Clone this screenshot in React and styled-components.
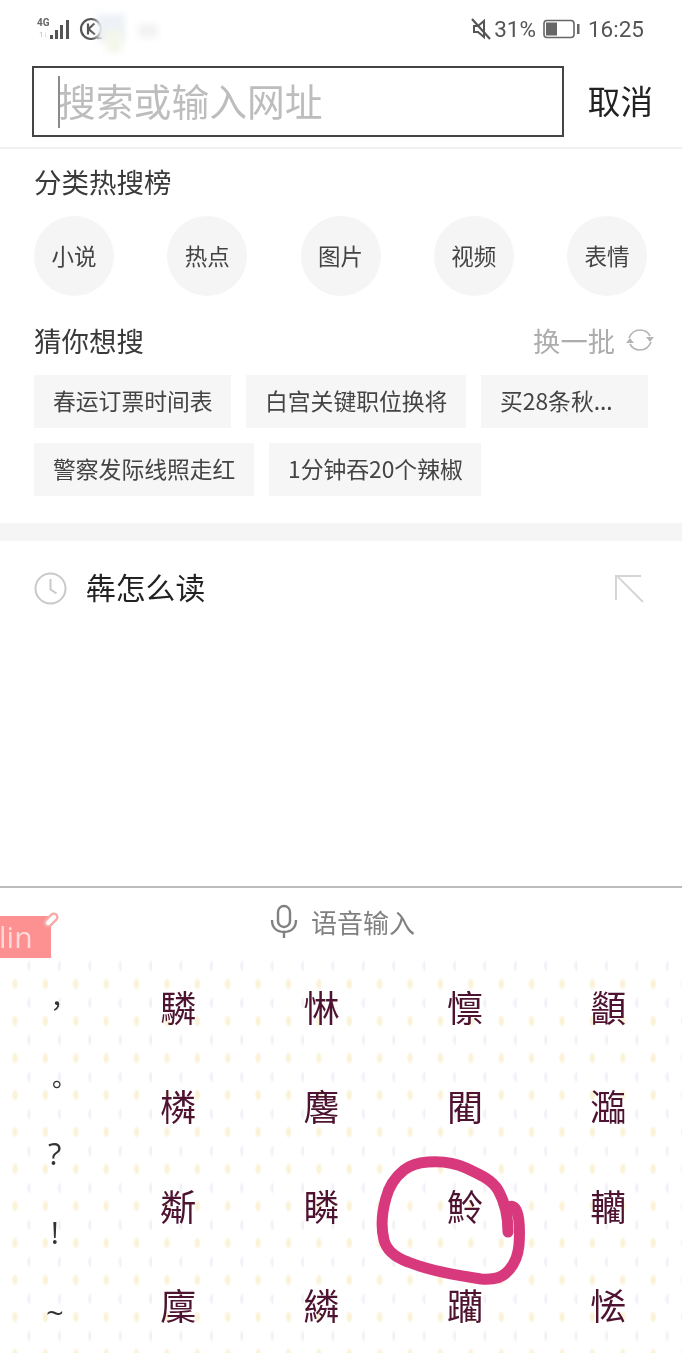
import React from "react";
import styled, { createGlobalStyle } from "styled-components";

const Global = createGlobalStyle`
  html, body { margin: 0; padding: 0; background: #fff; }
  * { box-sizing: border-box; }
`;

const CJK = `"Noto Sans CJK SC", "Noto Sans", sans-serif`;

const Page = styled.div`
  width: 682px;
  height: 1353px;
  overflow: hidden;
  display: flex;
  flex-direction: column;
  background: #fff;
  font-family: ${CJK};
  filter: blur(0.45px);
`;

const StatusBar = styled.div`
  height: 58px;
  flex: none;
  position: relative;
  display: flex;
  align-items: center;
  justify-content: space-between;
  padding: 0 38px 0 37px;
`;
const StatusGroup = styled.div`
  display: flex;
  align-items: center;
`;
const StatusText = styled.span`
  font-family: Roboto, sans-serif;
  font-size: 22.5px;
  line-height: 1;
  color: #555;
  margin-left: ${(p) => p.$ml || 0}px;
`;
const Smudge = styled.div`
  position: absolute;
  left: ${(p) => p.$x}px;
  top: ${(p) => p.$y}px;
  width: ${(p) => p.$w}px;
  height: ${(p) => p.$h}px;
  background: ${(p) => p.$c};
  filter: blur(3px);
`;

const SearchRow = styled.div`
  height: 91px;
  flex: none;
  display: flex;
  align-items: flex-start;
  padding: 8px 29px 0 32px;
  justify-content: space-between;
  border-bottom: 2px solid #f1f1f1;
`;
const SearchBox = styled.div`
  width: 532px;
  height: 71px;
  border: 2px solid #444;
  display: flex;
  align-items: center;
  padding: 0 0 4px 24px;
  position: relative;
`;
const Caret = styled.i`
  position: absolute;
  left: 24px;
  top: 8px;
  width: 2px;
  height: 52px;
  background: #8a8a8a;
`;
const Placeholder = styled.span`
  font-size: 37.8px;
  line-height: 1;
  color: #bdbdbd;
  white-space: nowrap;
`;
const Cancel = styled.span`
  font-size: 32.6px;
  line-height: 67px;
  color: #222;
`;

const Section = styled.section`
  padding: ${(p) => p.$pt}px 34px 0 34px;
  flex: none;
`;
const HeadRow = styled.div`
  display: flex;
  justify-content: space-between;
  align-items: center;
  height: 36px;
`;
const Title = styled.h2`
  margin: 0;
  font-size: 27.5px;
  font-weight: 400;
  line-height: 36px;
  color: #3a3a3a;
`;
const Circles = styled.div`
  margin-top: 17px;
  width: 613px;
  display: flex;
  justify-content: space-between;
`;
const Circle = styled.div`
  width: 80px;
  height: 80px;
  border-radius: 50%;
  background: #f5f5f5;
  display: flex;
  align-items: center;
  justify-content: center;
  padding-bottom: 2px;
  font-size: 22.5px;
  color: #444;
`;
const Refresh = styled.div`
  display: flex;
  align-items: center;
  gap: 10px;
  margin-right: -7px;
  font-size: 27.3px;
  color: #adadad;
`;
const Tags = styled.div`
  margin-top: 17px;
  display: flex;
  flex-direction: column;
  gap: 15px;
`;
const TagRow = styled.div`
  display: flex;
  gap: 15px;
`;
const Tag = styled.div`
  height: 53px;
  width: ${(p) => p.$w}px;
  background: #f6f6f6;
  display: flex;
  align-items: center;
  padding: 0 0 3px 19px;
  font-size: 22.8px;
  color: #444;
  white-space: nowrap;
`;

const Band = styled.div`
  height: 18px;
  flex: none;
  margin-top: 27px;
  background: #f5f5f5;
`;

const HistoryRow = styled.div`
  height: 94px;
  flex: none;
  display: flex;
  align-items: center;
  padding: 0 38px 0 34px;
  gap: 19px;
`;
const HistoryText = styled.span`
  flex: 1;
  padding-bottom: 4px;
  font-size: 29.8px;
  color: #222;
`;

const Keyboard = styled.div`
  margin-top: auto;
  flex: none;
  height: 467px;
  border-top: 2px solid #bcbcbc;
  display: flex;
  flex-direction: column;
`;
const VoiceBar = styled.div`
  height: 70px;
  flex: none;
  position: relative;
  display: flex;
  align-items: center;
  justify-content: center;
  gap: 13px;
  padding: 0 0 4px 3px;
  font-size: 26px;
  color: #808080;
`;
const NoteTag = styled.div`
  position: absolute;
  left: 0;
  top: 28px;
  width: 51px;
  height: 42px;
  background: #fd9090;
  color: #ffd9d9;
  font-family: "Open Sans", sans-serif;
  font-size: 30px;
  line-height: 42px;
  overflow: hidden;
  text-indent: -1px;
`;
const NotePin = styled.svg`
  position: absolute;
  left: 42px;
  top: 23px;
`;

const Candidates = styled.div`
  flex: 1;
  position: relative;
  display: grid;
  grid-template-columns: 106.5px repeat(4, 143.4px);
  background-color: #fff;
  background-image:
    radial-gradient(ellipse 3.5px 6.5px at 15px 26px, #fbf3d8 0 50%, transparent 100%),
    radial-gradient(ellipse 3.5px 6.5px at 30px 8px, #f3f0f8 0 50%, transparent 100%);
  background-size: 30.4px 37px;
`;
const PunctColumn = styled.div`
  display: grid;
  grid-auto-rows: 78px;
`;
const Punct = styled.div`
  display: flex;
  align-items: center;
  justify-content: center;
  padding: ${(p) => p.$dy || 0}px 0 0 ${(p) => p.$dx}px;
  font-family: "Open Sans", "Noto Sans CJK TC", sans-serif;
  font-size: ${(p) => p.$size}px;
  line-height: 1;
  color: #333;
`;
const CharColumn = styled.div`
  display: grid;
  grid-auto-rows: 99.5px;
`;
const Char = styled.div`
  display: flex;
  align-items: center;
  justify-content: center;
  padding-bottom: 4px;
  font-size: 36px;
  color: #4d1330;
`;
const Scribble = styled.svg`
  position: absolute;
  right: 0;
  top: 162px;
  pointer-events: none;
`;

const puncts = [
  { c: "，", dy: 16, dx: 7, size: 27 },
  { c: "。", dy: 18, dx: 7, size: 25 },
  { c: "?", dy: 0, dx: 3, size: 31 },
  { c: "!", dy: 2, dx: 3, size: 31 },
  { c: "~", dy: 6, dx: 3, size: 31 },
];
const columns = [
  ["驎", "橉", "斴", "廩"],
  ["惏", "麐", "瞵", "繗"],
  ["懔", "閵", "魿", "躪"],
  ["顲", "瀶", "轥", "恡"],
];

export default function App() {
  return (
    <Page>
      <Global />
      <StatusBar>
        <StatusGroup>
          <svg width="41" height="28" viewBox="0 0 41 28">
            <text x="0" y="11" fontFamily="Roboto, sans-serif" fontWeight="700" fontSize="10" fill="#666">4G</text>
            <text x="2" y="22" fontFamily="Roboto, sans-serif" fontSize="8" fill="#bbb">1↓</text>
            <g fill="#555">
              <rect x="13" y="20" width="3" height="4" />
              <rect x="18" y="15" width="3" height="9" />
              <rect x="23" y="10" width="3" height="14" />
              <rect x="29" y="5" width="3" height="19" />
            </g>
          </svg>
          <svg width="26" height="26" viewBox="0 0 26 26">
            <circle cx="13" cy="13" r="10" fill="none" stroke="#555" strokeWidth="2.2" />
            <path d="M10 7.5v11M16.5 7.5L10.5 13l6.5 5.5" fill="none" stroke="#555" strokeWidth="2.2" />
            <path d="M19 22h5" stroke="#555" strokeWidth="2.2" />
          </svg>
        </StatusGroup>
        <Smudge $x={97} $y={14} $w={28} $h={28} $c="#eef2f6" />
        <Smudge $x={106} $y={30} $w={16} $h={22} $c="#f4f7ea" />
        <Smudge $x={138} $y={24} $w={20} $h={14} $c="#f3f3f3" />
        <StatusGroup>
          <svg width="22" height="24" viewBox="0 0 22 24">
            <path d="M4 9h4l6-5v16l-6-5H4z" fill="none" stroke="#555" strokeWidth="2" />
            <path d="M2 2l18 20" stroke="#555" strokeWidth="2.2" />
          </svg>
          <StatusText $ml={2}>31%</StatusText>
          <svg width="37" height="22" viewBox="0 0 37 22" style={{ marginLeft: 7 }}>
            <rect x="1" y="2.5" width="30" height="17" rx="3" fill="none" stroke="#666" strokeWidth="1.6" />
            <rect x="3" y="4.5" width="11" height="13" fill="#666" />
            <rect x="34" y="6" width="2.5" height="10" fill="#666" />
          </svg>
          <StatusText $ml={8}>16:25</StatusText>
        </StatusGroup>
      </StatusBar>

      <SearchRow>
        <SearchBox>
          <Caret />
          <Placeholder>搜索或输入网址</Placeholder>
        </SearchBox>
        <Cancel>取消</Cancel>
      </SearchRow>

      <Section $pt={14}>
        <Title>分类热搜榜</Title>
        <Circles>
          {["小说", "热点", "图片", "视频", "表情"].map((t) => (
            <Circle key={t}>{t}</Circle>
          ))}
        </Circles>
      </Section>

      <Section $pt={26}>
        <HeadRow>
          <Title>猜你想搜</Title>
          <Refresh>
            换一批
            <svg width="30" height="26" viewBox="0 0 30 26" fill="none" stroke="#b5b5b5" strokeWidth="1.7">
              <path d="M4 11C6 6 10 3 15 3c4 0 8 2 10 6" />
              <path d="M26 15c-2 5-6 8-11 8-4 0-8-2-10-6" />
              <path d="M21 10h8l-4 5zM1 16h8l-4-5z" fill="#b5b5b5" stroke="none" />
            </svg>
          </Refresh>
        </HeadRow>
        <Tags>
          <TagRow>
            <Tag $w={197}>春运订票时间表</Tag>
            <Tag $w={220}>白宫关键职位换将</Tag>
            <Tag $w={167}>买28条秋...</Tag>
          </TagRow>
          <TagRow>
            <Tag $w={220}>警察发际线照走红</Tag>
            <Tag $w={212}>1分钟吞20个辣椒</Tag>
          </TagRow>
        </Tags>
      </Section>

      <Band />

      <HistoryRow>
        <svg width="33" height="33" viewBox="0 0 33 33" fill="none" stroke="#c9c9c9" strokeWidth="2">
          <circle cx="16.5" cy="16.5" r="15" />
          <path d="M16.5 7v10.5l6 4" />
        </svg>
        <HistoryText>犇怎么读</HistoryText>
        <svg width="29" height="29" viewBox="0 0 30 30" fill="none" stroke="#d4d4d4" strokeWidth="2">
          <path d="M1 27V2h26" />
          <path d="M2 2l27 27" />
        </svg>
      </HistoryRow>

      <Keyboard>
        <VoiceBar>
          <NoteTag>lin</NoteTag>
          <NotePin width="18" height="18" viewBox="0 0 18 18" fill="#fff" stroke="#f8a9a9" strokeWidth="2.4">
            <rect x="1.5" y="5.5" width="15" height="7" rx="3.5" transform="rotate(-45 9 9)" />
          </NotePin>
          <svg width="28" height="34" viewBox="0 0 28 34" fill="none" stroke="#808080" strokeWidth="2.4">
            <rect x="8" y="2" width="12" height="21" rx="6" />
            <path d="M2 16c0 8 5 12 12 12s12-4 12-12M14 28v6" />
          </svg>
          <span>语音输入</span>
        </VoiceBar>
        <Candidates>
          <PunctColumn>
            {puncts.map((p) => (
              <Punct key={p.c} $dy={p.dy} $dx={p.dx} $size={p.size}>{p.c}</Punct>
            ))}
          </PunctColumn>
          {columns.map((col) => (
            <CharColumn key={col[0]}>
              {col.map((c) => (
                <Char key={c}>{c}</Char>
              ))}
            </CharColumn>
          ))}
          <Scribble width="341" height="233" viewBox="0 0 341 233" fill="none" stroke="#d8387c" strokeWidth="11" strokeLinecap="round" strokeLinejoin="round">
            <path d="M167 112C167 98 165 84 157 70C151 60 142 56 125 48C112 42 100 41 87 42C75 43 68 46 63 50C53 58 48 66 45 78C41 92 40 108 43 120C46 132 56 138 67 142C90 151 115 155 140 159C152 160 160 158 165 153C174 145 177 136 178 125C179 110 179 100 176 92C174 86 170 85 167 88" />
          </Scribble>
        </Candidates>
      </Keyboard>
    </Page>
  );
}
